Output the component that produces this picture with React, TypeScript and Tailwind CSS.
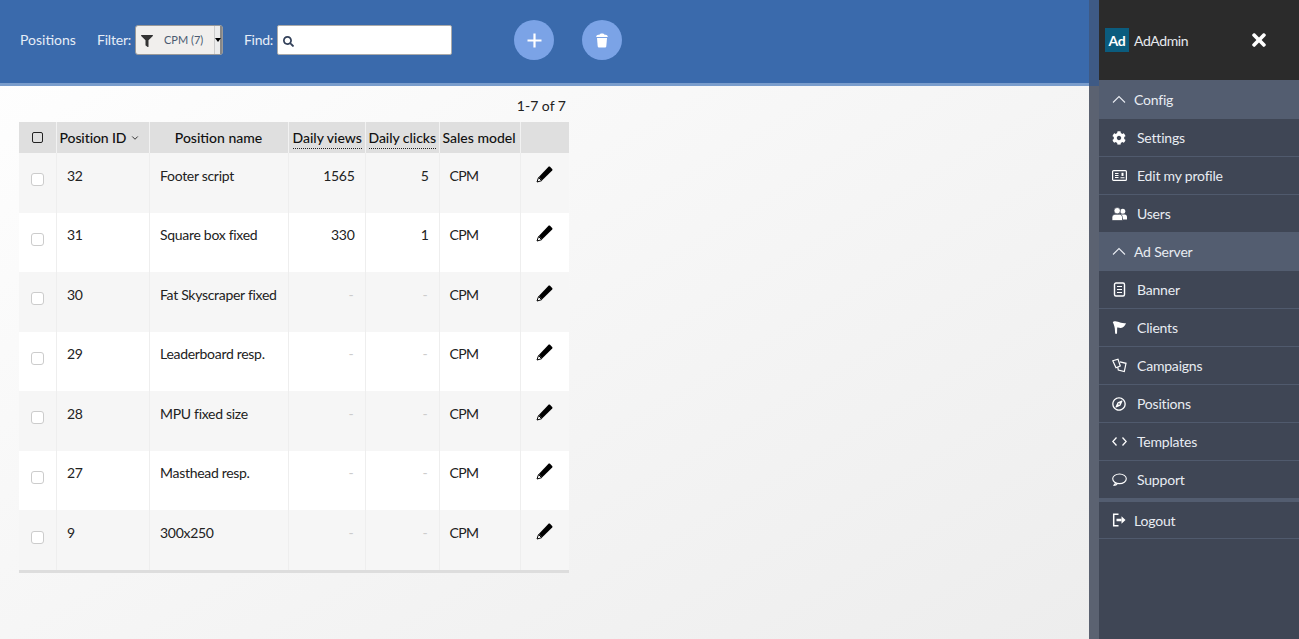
import React from "react";
import { FaCog, FaRegCompass, FaFilter, FaSearch, FaTimes } from "react-icons/fa";
import { LuChevronDown } from "react-icons/lu";

const rows = [
  ["32", "Footer script", "1565", "5"],
  ["31", "Square box fixed", "330", "1"],
  ["30", "Fat Skyscraper fixed", "-", "-"],
  ["29", "Leaderboard resp.", "-", "-"],
  ["28", "MPU fixed size", "-", "-"],
  ["27", "Masthead resp.", "-", "-"],
  ["9", "300x250", "-", "-"],
];

function Cards() {
  return (
    <svg width="15" height="15" viewBox="0 0 15 15" fill="none" stroke="currentColor" strokeWidth="1.2">
      <path d="M0.800 2.800 6 1.200 8.300 8 4 9.800Z" />
      <path d="M8 3.800 14 5.300 12.300 13.500 6.300 12 5.700 9.200" />
    </svg>
  );
}

function Trash() {
  return (
    <svg width="14" height="15" viewBox="0 0 14 15" fill="white">
      <path d="M1.200 3.600C1.200 2.200 3 1.700 4.800 1.500 5 .7 5.500.5 7 .5s2 .2 2.200 1c1.800.2 3.600.7 3.600 2.100 0 .4-.3.5-.8.5H2c-.5 0-.8-.1-.8-.5z" />
      <path d="M2 5h10l-.7 8.300c-.1.8-.7 1.200-1.500 1.200H4.200c-.8 0-1.400-.4-1.500-1.200z" />
    </svg>
  );
}

function Plus() {
  return (
    <svg width="15" height="15" viewBox="0 0 15 15" stroke="white" strokeWidth="2.2">
      <path d="M7.500 0.500v14M.5 7.500h14" />
    </svg>
  );
}

function Chevron() {
  return (
    <svg width="14" height="9" viewBox="0 0 14 9" fill="none" stroke="currentColor" strokeWidth="1.100">
      <path d="M1 7.500 7 1.500l6 6" />
    </svg>
  );
}

function Users() {
  return (
    <svg width="15" height="14" viewBox="0 0 15 14" fill="currentColor">
      <circle cx="10.800" cy="4.200" r="2.500" />
      <path d="M9 7.500h3.800c1.300 0 2.200 1.200 2.200 2.600V12.500h-4z" />
      <circle cx="5.200" cy="3.700" r="3.200" stroke="#3f4655" strokeWidth="0.700" />
      <path d="M3 7.300h4.500c1.700 0 3 1.500 3 3.200v3H0v-3c0-1.700 1.300-3.200 3-3.200z" stroke="#3f4655" strokeWidth="0.700" />
    </svg>
  );
}

function IdCard() {
  return (
    <svg width="15" height="13" viewBox="0 0 15 13" fill="none" stroke="currentColor">
      <rect x="0.600" y="1.600" width="13.800" height="9.800" rx="1" strokeWidth="1.200" />
      <path d="M3 4.500h3.500M3 6.500h3.500M3 8.500h3.500M8.500 8.800h4" strokeWidth="1.100" />
      <rect x="9.500" y="3.800" width="2" height="3.200" fill="currentColor" strokeWidth="0" />
    </svg>
  );
}

function Doc() {
  return (
    <svg width="15" height="15" viewBox="0 0 15 15" fill="none" stroke="currentColor">
      <rect x="2.500" y="1" width="10" height="13" rx="1.500" strokeWidth="1.400" />
      <path d="M5 4.500h5M5 7.500h5M5 10.500h5" strokeWidth="1.100" />
    </svg>
  );
}

function Flag() {
  return (
    <svg width="15" height="15" viewBox="0 0 15 15" fill="currentColor">
      <path d="M.8 2.200C1.500 1 4 .8 6 1.800c2.200 1.100 5 1.700 8 1.400-1 2.600-3 5-5.500 4.700-1.400-.2-2.300-.7-3.300-.3L5 13.800H3.200L2.800 8.500C2.500 6 1.600 3.800.8 2.200z" />
    </svg>
  );
}

function Code() {
  return (
    <svg width="15" height="15" viewBox="0 0 15 15" fill="none" stroke="currentColor" strokeWidth="1.300">
      <path d="M4.500 3.500.8 7.500l3.700 4M10.500 3.500l3.700 4-3.700 4" />
    </svg>
  );
}

function Bubble() {
  return (
    <svg width="15" height="15" viewBox="0 0 15 15" fill="none" stroke="currentColor" strokeWidth="1.100">
      <ellipse cx="7.500" cy="6.800" rx="6.800" ry="4.800" />
      <path d="M3.500 10.700C3.300 12 2.500 13 1.500 13.500c1.800 0 3.300-.8 4-2" />
    </svg>
  );
}

function Logout() {
  return (
    <svg width="14" height="14" viewBox="0 0 14 14" fill="none" stroke="currentColor">
      <path d="M6.500 1.200H1.700v11.600h4.800" strokeWidth="1.500" />
      <path d="M4.500 7H9.500" strokeWidth="2.500" />
      <path d="M9.500 3.200 13.500 7l-4 3.800z" fill="currentColor" strokeWidth="0" />
    </svg>
  );
}

function Pencil() {
  return (
    <svg width="17" height="17" viewBox="0 0 17 17" className="mx-auto">
      <path d="M12.500.8c.5-.4 1-.4 1.500 0l2.200 2.200c.4.5.4 1 0 1.500L6 14.500 2.800 11z" fill="#000" />
      <path d="M2.500 11.500 1 16l4.700-1.300z" fill="#fff" stroke="#000" strokeWidth="1" />
    </svg>
  );
}

function Group({ label, h = "h-[38px]" }: { label: string; h?: string }) {
  return (
    <div className={`flex ${h} items-center bg-[#535d70] pl-[13px] text-[14px] tracking-[-0.2px] text-[#e8ecf2]`}>
      <span className="flex w-[22px] items-center"><Chevron /></span>
      {label}
    </div>
  );
}

function Item({ label, icon, last }: { label: string; icon: React.ReactNode; last?: boolean }) {
  return (
    <div className={`flex items-center pl-[13px] text-[14px] tracking-[-0.2px] text-[#e8ecf2] ${last ? "h-[37px]" : "h-[38px] border-b border-[#505a6d]"}`}>
      <span className="flex w-[25px] items-center text-white">{icon}</span>
      {label}
    </div>
  );
}

export default function App() {
  return (
    <div className="flex h-[639px] w-full overflow-hidden text-[14px] text-[#222]" style={{ fontFamily: "Lato, 'Noto Sans', sans-serif" }}>
      <main className="flex min-w-0 flex-1 flex-col bg-gradient-to-br from-white to-[#ededed]">
        <header className="flex h-[86px] items-start border-b-[3px] border-[#7a9dcc] bg-[#3a6aac] text-[14px] text-[#e6edf7]">
          <div className="flex h-[80px] items-center pb-[1px]">
            <span className="ml-[20px] w-[77px]">Positions</span>
            <span className="w-[38px] tracking-[-0.2px]">Filter:</span>
            <div className="mt-[1px] flex h-[30px] w-[88px] items-center rounded-[3px] border border-[#999] bg-[#f1efed] pl-[5px] text-[#4a5a70]">
              <FaFilter size={12} className="mt-[2px] text-[#333]" />
              <span className="ml-[11px] flex-1 text-[11px]">CPM (7)</span>
              <span className="flex h-full w-[8px] items-center justify-center border-l border-r-2 border-l-[#ccc] border-r-[#888] bg-[#ececec]">
                <span className="h-0 w-0 border-x-[3px] border-t-[4px] border-x-transparent border-t-black" />
              </span>
            </div>
            <span className="ml-[21px] w-[33px] tracking-[-0.3px]">Find:</span>
            <div className="mt-[1px] flex h-[30px] w-[175px] items-center rounded-[2px] border border-[#aaa] bg-white pl-[5px]">
              <FaSearch size={11} className="mt-[2px] text-[#33415a]" />
            </div>
            <button className="ml-[62px] mt-[1px] flex h-[40px] w-[40px] items-center justify-center rounded-full bg-[#7ba3e6]">
              <Plus />
            </button>
            <button className="ml-[28px] mt-[1px] flex h-[40px] w-[40px] items-center justify-center rounded-full bg-[#7ba3e6]">
              <Trash />
            </button>
          </div>
        </header>
        <section className="ml-[19px] w-[550px]">
          <div className="flex h-[36px] items-center justify-end pb-[2px] pr-[3px] pt-[4px]">1-7 of 7</div>
          <table className="w-[550px] table-fixed border-collapse">
            <colgroup>
              <col className="w-[37px]" />
              <col className="w-[93px]" />
              <col className="w-[139px]" />
              <col className="w-[77px]" />
              <col className="w-[74px]" />
              <col className="w-[81px]" />
              <col className="w-[49px]" />
            </colgroup>
            <thead>
              <tr className="h-[31px] bg-[#dfdfdf] text-[14px] font-medium text-[#111]">
                <th className="border-r border-[#f2f2f2] p-0">
                  <span className="mx-auto block h-[11px] w-[11px] rounded-[2px] border border-[#222]" />
                </th>
                <th className="border-r border-[#f2f2f2] pl-[3px] text-left font-medium tracking-[-0.1px]">
                  <span className="flex items-center gap-[4px]">Position ID <LuChevronDown size={10} /></span>
                </th>
                <th className="border-r border-[#f2f2f2] text-center font-medium">Position name</th>
                <th className="border-r border-[#f2f2f2] pl-[4px] text-left font-medium">
                  <span className="border-b border-dotted border-[#222] pb-[2px]">Daily views</span>
                </th>
                <th className="border-r border-[#f2f2f2] pl-[3px] text-left font-medium tracking-[-0.05px]">
                  <span className="border-b border-dotted border-[#222] pb-[2px]">Daily clicks</span>
                </th>
                <th className="border-r border-[#f2f2f2] pl-[3px] text-left font-medium">Sales model</th>
                <th />
              </tr>
            </thead>
            <tbody className="tracking-[-0.3px]">
              {rows.map((r, i) => (
                <tr key={r[0]} className={`${i === 6 ? "h-[60px]" : "h-[59.5px]"} ${i % 2 === 0 ? "bg-[#f6f6f6]" : "bg-white"}`}>
                  <td className="border-r border-[#eee] p-0 pb-[6px] align-middle">
                    <span className="mx-auto block h-[13px] w-[13px] rounded-[3px] border border-[#ccc] bg-white" />
                  </td>
                  <td className="border-r border-[#eee] pb-[15px] pl-[10.5px]">{r[0]}</td>
                  <td className="border-r border-[#eee] pb-[15px] pl-[10.5px]">{r[1]}</td>
                  <td className={`border-r border-[#eee] pb-[15px] text-right ${r[2] === "-" ? "pr-[11px] text-[#ccc]" : "pr-[10px]"}`}>{r[2]}</td>
                  <td className={`border-r border-[#eee] pb-[15px] text-right ${r[3] === "-" ? "pr-[11px] text-[#ccc]" : "pr-[10px]"}`}>{r[3]}</td>
                  <td className="border-r border-[#eee] pb-[15px] pl-[10px] tracking-[-0.6px]">CPM</td>
                  <td className="pb-[17px] text-center">
                    <Pencil />
                  </td>
                </tr>
              ))}
            </tbody>
          </table>
          <div className="h-[3px] bg-[#ddd]" />
        </section>
      </main>
      <div className="flex w-[10px] flex-col bg-[#5b6271]">
        <div className="h-[86px] bg-[#3e5a85]" />
      </div>
      <aside className="flex w-[200px] flex-col bg-[#3f4655]">
        <div className="flex h-[80px] items-center bg-[#2b2b2b] pl-[6px] text-[#e6e9ee]">
          <span className="flex h-[24px] w-[24px] items-center justify-center bg-[#0b5c7e] text-[14px] font-bold tracking-[-0.3px] text-white">Ad</span>
          <span className="ml-[5px] w-[115px] tracking-[-0.4px]">AdAdmin</span>
          <FaTimes size={20} className="text-white" />
        </div>
        <Group label="Config" h="h-[39px]" />
        <Item label="Settings" icon={<FaCog size={14} />} />
        <Item label="Edit my profile" icon={<IdCard />} />
        <Item label="Users" icon={<Users />} last />
        <Group label="Ad Server" h="h-[39px]" />
        <Item label="Banner" icon={<Doc />} />
        <Item label="Clients" icon={<Flag />} />
        <Item label="Campaigns" icon={<Cards />} />
        <Item label="Positions" icon={<FaRegCompass size={14} />} />
        <Item label="Templates" icon={<Code />} />
        <Item label="Support" icon={<Bubble />} last />
        <div className="h-[4px] bg-[#535d70]" />
        <div className="flex h-[37px] items-center border-b border-[#505a6d] pl-[13px] text-[14px] tracking-[-0.2px] text-[#e8ecf2]">
          <span className="flex w-[22px] items-center text-white"><Logout /></span>
          Logout
        </div>
      </aside>
    </div>
  );
}
